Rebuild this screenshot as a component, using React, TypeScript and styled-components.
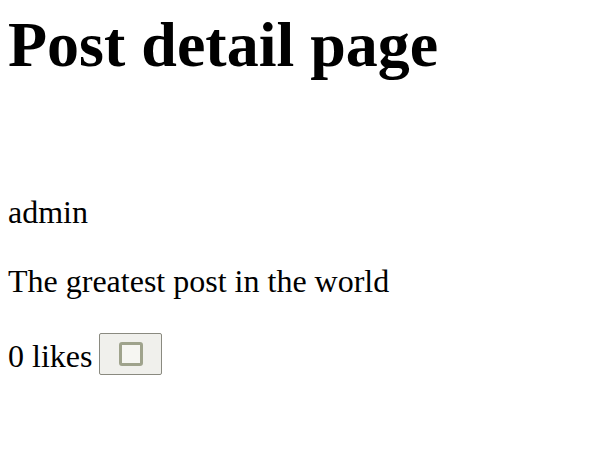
import styled, { createGlobalStyle } from 'styled-components';

const GlobalStyle = createGlobalStyle`
  body {
    margin: 8px;
    font-family: "Liberation Serif", "Times New Roman", serif;
    font-size: 32px;
    color: #000;
    background: #fff;
  }
`;

const Title = styled.h1`
  font-size: 64px;
  font-weight: bold;
  margin: 0 0 112px;
  line-height: 1.15;
`;

const Text = styled.p`
  margin: 0 0 33px;
  line-height: 1.15;
`;

const LikeRow = styled.div`
  display: flex;
  align-items: flex-end;
  gap: 7px;
`;

const LikeButton = styled.button`
  width: 63px;
  height: 42px;
  padding: 0;
  display: flex;
  align-items: center;
  justify-content: center;
  background: #f0f0ec;
  border: 1px solid #8a8a80;
  border-radius: 2px;
  cursor: pointer;
`;

const Box = styled.span`
  width: 18px;
  height: 18px;
  border: 3px solid #9fa38c;
  border-radius: 3px;
  background: #f6f6f2;
`;

const App = () => {
  return (
    <>
      <GlobalStyle />
      <Title>Post detail page</Title>
      <Text>admin</Text>
      <Text>The greatest post in the world</Text>
      <LikeRow>
        <span>0 likes</span>
        <LikeButton aria-label="like">
          <Box />
        </LikeButton>
      </LikeRow>
    </>
  );
};

export default App;
